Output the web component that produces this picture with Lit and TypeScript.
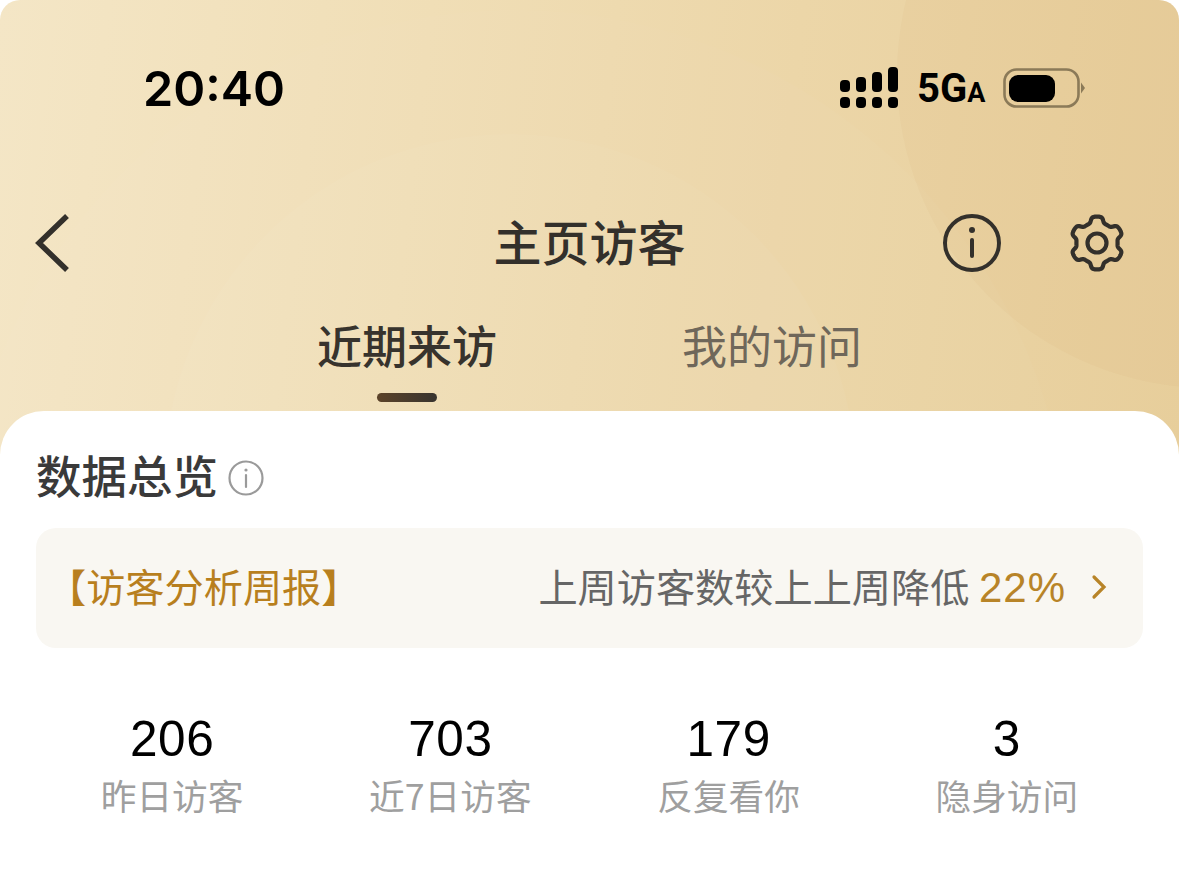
import { LitElement, html, css, svg } from 'lit';
import { customElement } from 'lit/decorators.js';

// six-lobed gear outline, traced in polar steps around the centre
function gearPath(cx: number, cy: number) {
  const points: string[] = [];
  for (let i = 0; i < 240; i++) {
    const t = (i / 240) * Math.PI * 2;
    const wave = Math.tanh(-2.2 * Math.cos(6 * t));
    const r = 23.5 + 3 * wave;
    points.push(`${(cx + r * Math.cos(t)).toFixed(2)} ${(cy + r * Math.sin(t)).toFixed(2)}`);
  }
  return `M${points.join('L')}Z`;
}

const STATS = [
  { value: '206', label: '昨日访客' },
  { value: '703', label: '近7日访客' },
  { value: '179', label: '反复看你' },
  { value: '3', label: '隐身访问' },
];

@customElement('app-root')
export class AppRoot extends LitElement {
  static styles = css`
    :host {
      display: block;
      height: 877px;
      overflow: hidden;
      background: #fff;
      font-family: "Noto Sans CJK SC", "Liberation Sans", sans-serif;
    }

    * {
      box-sizing: border-box;
    }

    .hero {
      position: relative;
      overflow: hidden;
      height: 470px;
      border-radius: 20px 20px 0 0;
      background: linear-gradient(97deg, #f4e6c6 0%, #f0deb6 35%, #ecd6a8 65%, #e7ce9b 100%);
    }

    .arc {
      position: absolute;
      border-radius: 50%;
    }

    .arc-outer {
      left: -40px;
      top: 10px;
      width: 1110px;
      height: 1110px;
      background: rgba(255, 255, 255, 0.025);
    }

    .arc-inner {
      left: 164px;
      top: 134px;
      width: 692px;
      height: 692px;
      background: rgba(255, 255, 255, 0.035);
    }

    .arc-corner {
      left: 897px;
      top: -238px;
      width: 626px;
      height: 626px;
      background: rgba(190, 145, 70, 0.05);
    }

    .status,
    .nav,
    .tabs {
      position: relative;
    }

    .status {
      height: 176px;
      display: flex;
      align-items: center;
      padding-left: 143px;
      padding-right: 92px;
    }

    .time {
      font-family: Inter, "Liberation Sans", sans-serif;
      font-weight: 600;
      font-size: 48.5px;
      color: #000;
      flex: 1;
    }

    .status-icons {
      display: flex;
      align-items: center;
    }

    .net {
      width: 68px;
      margin: 6px 0 0 18px;
      display: flex;
      align-items: baseline;
      font-family: "Liberation Sans Narrow", Roboto, sans-serif;
      font-weight: 700;
      font-size: 40px;
      line-height: 40px;
      color: #000;
    }

    .net small {
      font-size: 27px;
    }

    .battery {
      margin-left: 18px;
      display: block;
    }

    .nav {
      height: 134px;
      display: grid;
      grid-template-columns: 1fr auto 1fr;
      align-items: center;
      padding: 0 34px;
      color: #33302b;
    }

    .nav h1 {
      margin: 0 0 6px;
      font-size: 48px;
      line-height: 60px;
      font-weight: 500;
    }

    .nav-actions {
      display: flex;
      justify-content: flex-end;
      align-items: center;
      gap: 65px;
      margin-right: 18px;
    }

    .tabs {
      display: flex;
      justify-content: center;
      gap: 185px;
      height: 101px;
      font-size: 45px;
    }

    .tab {
      display: flex;
      flex-direction: column;
      align-items: center;
      line-height: 70px;
      color: #6f675a;
    }

    .tab.active {
      color: #37332d;
      font-weight: 500;
    }

    .tab i {
      display: block;
      width: 60px;
      height: 9px;
      margin-top: 13px;
      border-radius: 5px;
      background: linear-gradient(90deg, #5c4329, #38342f);
    }

    .card {
      position: relative;
      margin-top: -59px;
      padding: 33px 36px 0;
      background: #fff;
      border-radius: 44px 44px 0 0;
    }

    .heading {
      display: flex;
      align-items: center;
      gap: 10px;
      height: 60px;
      color: #3a3a3a;
      font-size: 45.5px;
      font-weight: 500;
    }

    .heading svg {
      margin-top: 8px;
    }

    .report {
      margin-top: 24px;
      height: 120px;
      display: flex;
      align-items: center;
      padding: 0 36px 6px 11px;
      border-radius: 20px;
      background: #f9f7f2;
      font-size: 39.2px;
      color: #666;
    }

    .report-title {
      flex: 1;
      color: #b87f1e;
    }

    .report b {
      font-family: "Liberation Sans", sans-serif;
      font-weight: 400;
      font-size: 42px;
      letter-spacing: 1px;
      padding-top: 6px;
      color: #b88428;
      margin-left: 9.5px;
    }

    .report svg {
      margin: 4px 0 0 25px;
    }

    .stats {
      display: grid;
      grid-template-columns: repeat(4, 1fr);
      margin: 61px -3px 0;
      text-align: center;
    }

    .stat-value {
      font-family: "Liberation Sans", sans-serif;
      font-size: 49.5px;
      letter-spacing: 0.5px;
      line-height: 60px;
      color: #000;
    }

    .stat-label {
      font-size: 35.7px;
      line-height: 52px;
      color: #9f9f9f;
    }
  `;

  private renderSignal() {
    const columns = [
      { x: 840, top: 80 },
      { x: 856, top: 77 },
      { x: 872, top: 72 },
      { x: 888, top: 67 },
    ];
    return html`<svg width="60" height="44" viewBox="839 66 60 44">
      ${columns.map(
        (c) => svg`
          <rect x=${c.x} y=${c.top} width="10" height=${92 - c.top} rx="4" fill="#000"></rect>
          <rect x=${c.x} y="97" width="10" height="11" rx="4" fill="#000"></rect>
        `,
      )}
    </svg>`;
  }

  render() {
    return html`
      <div class="hero">
        <div class="arc arc-outer"></div>
        <div class="arc arc-inner"></div>
        <div class="arc arc-corner"></div>

        <div class="status">
          <span class="time">20:40</span>
          <div class="status-icons">
            ${this.renderSignal()}
            <span class="net">5G<small>A</small></span>
            <svg class="battery" width="84" height="40" viewBox="0 0 84 40">
              <rect x="1.5" y="1.5" width="74" height="37" rx="12" fill="none" stroke="#8b7a58" stroke-width="2.6"></rect>
              <rect x="6" y="7" width="46" height="27" rx="9" fill="#000"></rect>
              <path d="M78 14.5 L82 20 L78 25.5Z" fill="#8b7a58"></path>
            </svg>
          </div>
        </div>

        <div class="nav">
          <svg width="36" height="58" viewBox="0 0 36 58" fill="none" stroke="#33302b" stroke-width="5.5">
            <path d="M33 2 L5 29 L33 56"></path>
          </svg>
          <h1>主页访客</h1>
          <div class="nav-actions">
            <svg width="60" height="60" viewBox="0 0 60 60" fill="none" stroke="#33302b" stroke-width="4" stroke-linecap="round">
              <circle cx="30" cy="30" r="27"></circle>
              <circle cx="30" cy="17" r="3" fill="#33302b" stroke="none"></circle>
              <path d="M30 27 V43"></path>
            </svg>
            <svg width="60" height="60" viewBox="0 0 60 60" fill="none" stroke="#33302b" stroke-width="4.2">
              <path d=${gearPath(30, 30)}></path>
              <circle cx="30" cy="30" r="9.5"></circle>
            </svg>
          </div>
        </div>

        <div class="tabs">
          <div class="tab active">近期来访<i></i></div>
          <div class="tab">我的访问</div>
        </div>
      </div>

      <div class="card">
        <div class="heading">
          数据总览
          <svg width="36" height="36" viewBox="0 0 36 36" fill="none" stroke="#9a9a9a" stroke-width="2.2" stroke-linecap="round">
            <circle cx="18" cy="18" r="16.5"></circle>
            <circle cx="18" cy="10" r="1.6" fill="#9a9a9a" stroke="none"></circle>
            <path d="M18 15 V27"></path>
          </svg>
        </div>

        <div class="report">
          <span class="report-title">【访客分析周报】</span>
          <span>上周访客数较上上周降低</span>
          <b>22%</b>
          <svg width="16" height="28" viewBox="0 0 16 28" fill="none" stroke="#b88428" stroke-width="3.2" stroke-linecap="round">
            <path d="M3 4 L13 14 L3 24"></path>
          </svg>
        </div>

        <div class="stats">
          ${STATS.map(
            (s) => html`
              <div>
                <div class="stat-value">${s.value}</div>
                <div class="stat-label">${s.label}</div>
              </div>
            `,
          )}
        </div>
      </div>
    `;
  }
}
